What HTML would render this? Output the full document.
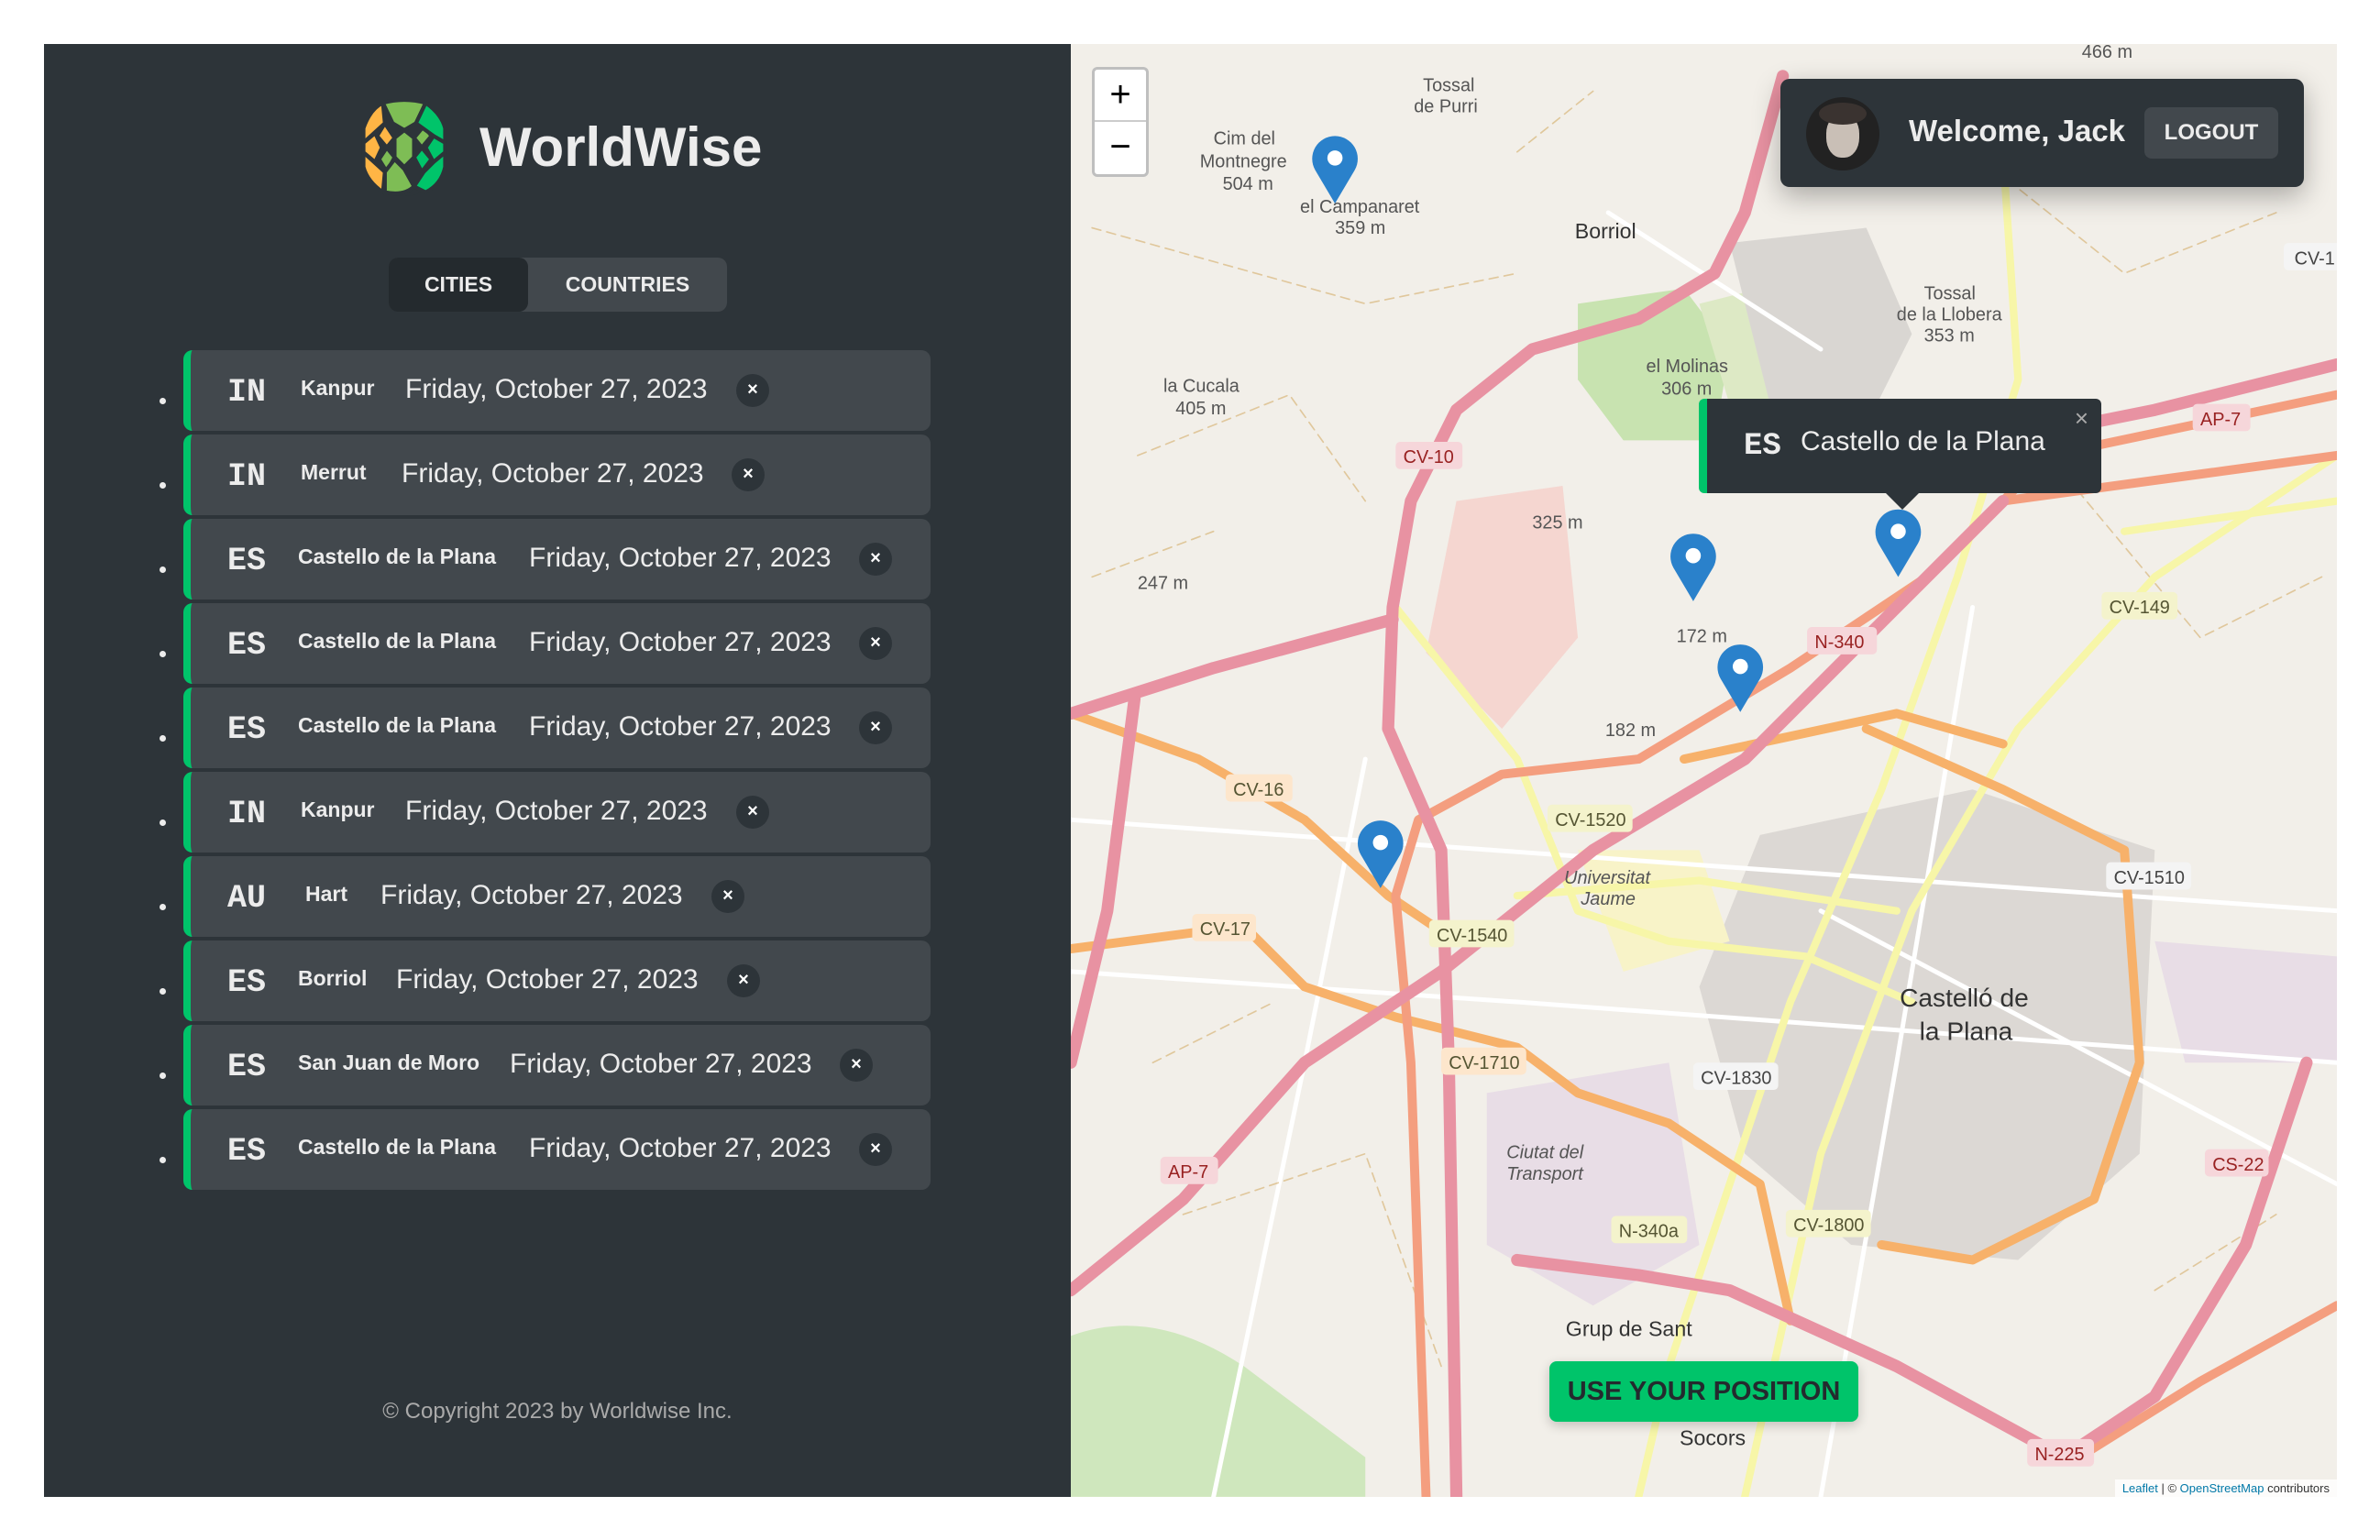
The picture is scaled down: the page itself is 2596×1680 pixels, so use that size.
<!DOCTYPE html>
<html><head><meta charset="utf-8">
<style>
*{margin:0;padding:0;box-sizing:border-box}
html,body{width:2596px;height:1680px;background:#fff;overflow:hidden;font-family:"Liberation Sans",sans-serif}
.side{position:absolute;left:48px;top:48px;width:1120px;height:1585px;background:#2d3439;color:#ececec}
.logo{position:absolute;left:340px;top:60px;width:106px;height:106px}
.brand{position:absolute;left:475px;top:78px;font-size:60px;font-weight:bold;color:#ececec}
.tabs{position:absolute;left:376px;top:233px;width:369px;height:59px;background:#42484d;border-radius:10px}
.tab{position:absolute;top:0;height:59px;line-height:59px;font-size:23px;font-weight:bold;text-align:center;color:#ececec}
.tab.a{left:0;width:152px;background:#242a2e;border-radius:10px}
.tab.b{left:152px;width:217px}
.item{position:absolute;left:152px;width:815px;height:88px;background:#42484d;border-radius:10px;border-left:8px solid #00c46a}
.dot{position:absolute;left:126px;width:7px;height:7px;border-radius:50%;background:#ececec}
.cc{position:absolute;left:40px;top:26px;font-family:"Liberation Mono",monospace;font-size:35px;font-weight:bold;color:#ececec}
.cn{position:absolute;top:28px;font-size:23px;font-weight:bold;color:#ececec}
.dt{position:absolute;top:26px;font-size:30px;color:#ececec}
.x{position:absolute;top:26px;width:36px;height:36px;border-radius:50%;background:#2d3439;color:#fff;font-size:20px;font-weight:bold;text-align:center;line-height:35px}
.copy{position:absolute;left:0;width:1120px;top:1478px;text-align:center;font-size:24px;color:#aaa}
.map{position:absolute;left:1168px;top:48px;width:1381px;height:1585px;background:#f2efe9;overflow:hidden}
.zoom{position:absolute;left:23px;top:25px;width:62px;height:120px;background:#fff;border:3px solid rgba(0,0,0,.25);border-radius:6px}
.zoom div{height:57px;text-align:center;font-size:40px;line-height:55px;color:#000}
.user{position:absolute;left:774px;top:38px;width:571px;height:118px;background:#2d3439;border-radius:10px;box-shadow:0 10px 30px rgba(0,0,0,.3)}
.av{position:absolute;left:28px;top:20px;width:80px;height:80px;border-radius:50%;background:#222;overflow:hidden}
.av i{position:absolute;left:22px;top:18px;width:36px;height:48px;border-radius:45%;background:#c9bfb6}
.av b{position:absolute;left:14px;top:6px;width:52px;height:24px;border-radius:50%;background:#3a3330}
.wel{position:absolute;left:140px;top:38px;font-size:33px;color:#ececec;font-weight:bold}
.lo{position:absolute;left:397px;top:31px;width:146px;height:56px;background:#42484d;border-radius:8px;color:#ececec;font-size:24px;font-weight:bold;text-align:center;line-height:56px}
.pop{position:absolute;left:685px;top:387px;width:439px;height:103px;background:#2d3439;border-left:9px solid #00c46a;border-radius:6px;color:#ececec}
.pop .c{position:absolute;left:40px;top:33px;font-family:"Liberation Mono",monospace;font-size:34px;font-weight:bold}
.pop .n{position:absolute;left:102px;top:30px;font-size:30px}
.pop .cl{position:absolute;right:14px;top:6px;font-size:26px;color:#aaa}
.pop .tip{position:absolute;left:195px;top:103px;width:0;height:0;border-left:18px solid transparent;border-right:18px solid transparent;border-top:18px solid #2d3439}
.btn{position:absolute;left:522px;top:1437px;width:337px;height:66px;background:#00c46a;border-radius:8px;color:#242a2e;font-size:29px;font-weight:bold;text-align:center;line-height:66px;box-shadow:0 4px 12px rgba(0,0,0,.2)}
.attr{position:absolute;right:0;bottom:0;background:rgba(255,255,255,.8);font-size:13px;padding:2px 8px;color:#333}
.attr b{color:#0078a8;font-weight:normal}
</style></head><body>
<div class="side">
 <svg class="logo" viewBox="0 0 100 100">
  <ellipse cx="50" cy="50" rx="44" ry="50" fill="#2d3439"/>
  <g stroke="#2d3439" stroke-width="4">
   <path d="M8 45 L8 30 Q15 10 28 4 L30 25 Z" fill="#ffb545"/>
   <path d="M8 55 L30 75 L28 96 Q12 85 8 70Z" fill="#ffb545"/>
   <path d="M8 45 L20 35 L27 50 L20 65 L8 55Z" fill="#ffb545"/>
   <path d="M30 25 L40 40 L32 50 L22 38Z" fill="#ffb545"/>
   <path d="M28 4 Q50 -2 72 4 L62 25 L50 32 L38 25Z" fill="#7ebd55"/>
   <path d="M40 40 L50 32 L60 40 L60 60 L50 70 L40 60Z" fill="#7ebd55"/>
   <path d="M32 50 L40 60 L32 75 L24 62Z" fill="#7ebd55"/>
   <path d="M30 75 L40 62 L50 72 L60 90 Q50 100 30 96Z" fill="#7ebd55"/>
   <path d="M60 40 L70 28 L78 38 L68 50Z" fill="#7ebd55"/>
   <path d="M72 4 Q88 15 92 30 L92 45 L80 38 L62 25Z" fill="#00c46a"/>
   <path d="M80 38 L92 45 L92 55 L80 65 L72 50Z" fill="#00c46a"/>
   <path d="M60 60 L68 50 L78 62 L68 75Z" fill="#00c46a"/>
   <path d="M70 75 L80 65 L92 55 L92 70 Q88 88 72 96 L60 90Z" fill="#00c46a"/>
  </g>
 </svg>
 <div class="brand">WorldWise</div>
 <div class="tabs"><div class="tab a">CITIES</div><div class="tab b">COUNTRIES</div></div>

 <div class="dot" style="top:386px"></div><div class="item" style="top:334px"><span class="cc">IN</span><span class="cn" style="left:120px">Kanpur</span><span class="dt" style="left:234px">Friday, October 27, 2023</span><span class="x" style="left:595px">×</span></div>
 <div class="dot" style="top:478px"></div><div class="item" style="top:426px"><span class="cc">IN</span><span class="cn" style="left:120px">Merrut</span><span class="dt" style="left:230px">Friday, October 27, 2023</span><span class="x" style="left:590px">×</span></div>
 <div class="dot" style="top:570px"></div><div class="item" style="top:518px"><span class="cc">ES</span><span class="cn" style="left:117px">Castello de la Plana</span><span class="dt" style="left:369px">Friday, October 27, 2023</span><span class="x" style="left:729px">×</span></div>
 <div class="dot" style="top:662px"></div><div class="item" style="top:610px"><span class="cc">ES</span><span class="cn" style="left:117px">Castello de la Plana</span><span class="dt" style="left:369px">Friday, October 27, 2023</span><span class="x" style="left:729px">×</span></div>
 <div class="dot" style="top:754px"></div><div class="item" style="top:702px"><span class="cc">ES</span><span class="cn" style="left:117px">Castello de la Plana</span><span class="dt" style="left:369px">Friday, October 27, 2023</span><span class="x" style="left:729px">×</span></div>
 <div class="dot" style="top:846px"></div><div class="item" style="top:794px"><span class="cc">IN</span><span class="cn" style="left:120px">Kanpur</span><span class="dt" style="left:234px">Friday, October 27, 2023</span><span class="x" style="left:595px">×</span></div>
 <div class="dot" style="top:938px"></div><div class="item" style="top:886px"><span class="cc">AU</span><span class="cn" style="left:125px">Hart</span><span class="dt" style="left:207px">Friday, October 27, 2023</span><span class="x" style="left:568px">×</span></div>
 <div class="dot" style="top:1030px"></div><div class="item" style="top:978px"><span class="cc">ES</span><span class="cn" style="left:117px">Borriol</span><span class="dt" style="left:224px">Friday, October 27, 2023</span><span class="x" style="left:585px">×</span></div>
 <div class="dot" style="top:1122px"></div><div class="item" style="top:1070px"><span class="cc">ES</span><span class="cn" style="left:117px">San Juan de Moro</span><span class="dt" style="left:348px">Friday, October 27, 2023</span><span class="x" style="left:708px">×</span></div>
 <div class="dot" style="top:1214px"></div><div class="item" style="top:1162px"><span class="cc">ES</span><span class="cn" style="left:117px">Castello de la Plana</span><span class="dt" style="left:369px">Friday, October 27, 2023</span><span class="x" style="left:729px">×</span></div>

 <div class="copy">© Copyright 2023 by Worldwise Inc.</div>
</div>

<div class="map">
 <svg width="1381" height="1585" viewBox="706 29 834 957" style="position:absolute;left:0;top:0" fill="none" stroke-linecap="round" stroke-linejoin="round">
  <path d="M1040 200 L1110 190 L1140 230 L1130 290 L1070 290 L1040 250Z" fill="#c8e3b0"/>
  <path d="M1120 200 L1200 180 L1220 260 L1150 300Z" fill="#dde9c5"/>
  <path d="M1140 160 L1230 150 L1260 220 L1220 300 L1170 280Z" fill="#d9d6d2"/>
  <path d="M960 330 L1030 320 L1040 420 L990 480 L940 430Z" fill="#f5d6d0"/>
  <path d="M1160 550 L1300 520 L1420 560 L1410 760 L1330 830 L1220 820 L1150 760 L1120 650Z" fill="#dcd8d4"/>
  <path d="M980 720 L1100 700 L1120 820 L1050 860 L980 820Z" fill="#e8dde6"/>
  <path d="M706 880 Q760 860 820 900 L900 960 L900 986 L706 986Z" fill="#cfe7bd"/>
  <path d="M1040 560 L1120 560 L1140 620 L1070 640Z" fill="#f8f3c8"/>
  <path d="M1420 620 L1540 630 L1540 700 L1440 700Z" fill="#e8dde6"/>
  <g stroke="#fff" stroke-width="3">
   <path d="M706 540 L1540 600"/><path d="M706 640 L1000 660 L1540 700"/><path d="M800 986 L860 700 L900 500"/>
   <path d="M1200 986 L1250 700 L1300 400"/><path d="M1540 780 L1200 600"/><path d="M1060 140 L1200 230"/>
  </g>
  <g stroke="#d8b77a" stroke-width="1" stroke-dasharray="6 4" opacity=".7">
   <path d="M720 150 L900 200 L1000 180"/><path d="M750 300 L850 260 L900 330"/><path d="M780 800 L900 760 L950 900"/>
   <path d="M1300 100 L1400 180 L1500 140"/><path d="M1350 300 L1450 420 L1530 380"/><path d="M1420 850 L1500 800"/>
   <path d="M760 700 L840 660"/><path d="M1000 100 L1050 60"/><path d="M720 380 L800 350"/>
  </g>
  <g stroke="#f7f6a8" stroke-width="5">
   <path d="M920 400 L1000 500 L1040 600 L1100 620 L1190 630 L1260 660"/>
   <path d="M1000 590 L1120 580 L1250 600"/>
   <path d="M1320 100 L1330 250 L1290 380 L1240 520 L1180 660 L1100 900 L1080 986"/>
   <path d="M1540 300 L1420 380 L1330 480 L1260 600 L1200 760 L1150 986"/>
   <path d="M1540 330 L1400 350"/>
  </g>
  <g stroke="#f7b16a" stroke-width="6">
   <path d="M706 470 L790 500 L860 540 L915 590 L960 620"/>
   <path d="M706 625 L820 610 L860 650 L920 670 L1000 690 L1040 720 L1100 740 L1160 780 L1180 870"/>
   <path d="M1230 480 L1320 520 L1400 560 L1410 700 L1380 790 L1300 830 L1240 820"/>
   <path d="M1110 500 L1250 470 L1320 490"/>
  </g>
  <g stroke="#f49e7f" stroke-width="6">
   <path d="M940 986 L930 700 L920 590 L935 540 L990 510 L1080 500 L1180 440 L1270 380 L1350 300 L1540 260"/>
   <path d="M1320 330 L1540 300"/>
   <path d="M1540 860 L1450 910 L1370 960"/>
  </g>
  <g stroke="#e892a2" stroke-width="8">
   <path d="M1175 50 L1150 140 L1130 180 L1080 210 L1010 230 L960 270 L930 330 L918 400 L915 480 L950 560 L955 700 L960 986"/>
   <path d="M706 850 L780 790 L860 700 L950 640 L1050 560 L1150 500 L1250 400 L1320 330"/>
   <path d="M1320 290 L1420 270 L1540 240"/>
   <path d="M706 470 L800 440 L918 408"/>
   <path d="M748 460 L730 600 L706 700"/>
   <path d="M1000 830 L1080 840 L1140 850 L1250 900 L1360 960 L1420 920 L1480 820 L1520 700"/>
  </g>
  <g font-family="Liberation Sans,sans-serif" font-size="12" fill="#555" stroke="none">
   <text x="800" y="95">Cim del</text><text x="791" y="110">Montnegre</text><text x="806" y="125">504 m</text>
   <text x="938" y="60">Tossal</text><text x="932" y="74">de Purri</text>
   <text x="857" y="140">el Campanaret</text><text x="880" y="154">359 m</text>
   <text x="1038" y="157" font-size="14" fill="#333">Borriol</text>
   <text x="1268" y="197">Tossal</text><text x="1250" y="211">de la Llobera</text><text x="1268" y="225">353 m</text>
   <text x="1085" y="245">el Molinas</text><text x="1095" y="260">306 m</text>
   <text x="767" y="258">la Cucala</text><text x="775" y="273">405 m</text>
   <text x="1010" y="348">325 m</text><text x="750" y="388">247 m</text><text x="1105" y="423">172 m</text><text x="1058" y="485">182 m</text>
   <text x="1372" y="38">466 m</text>
   <text x="1252" y="663" font-size="17" fill="#333">Castelló de</text><text x="1265" y="685" font-size="17" fill="#333">la Plana</text>
   <text x="1031" y="582" font-style="italic">Universitat</text><text x="1042" y="596" font-style="italic">Jaume</text>
   <text x="993" y="763" font-style="italic">Ciutat del</text><text x="993" y="777" font-style="italic">Transport</text>
   <text x="1032" y="880" font-size="14" fill="#333">Grup de Sant</text>
   <text x="1107" y="952" font-size="14" fill="#333">Socors</text>
  </g>
  <g font-family="Liberation Sans,sans-serif" font-size="12" stroke="none">
   <rect x="920" y="291" width="44" height="18" rx="3" fill="#f6d6da"/><text x="925" y="305" fill="#922">CV-10</text>
   <rect x="1445" y="266" width="38" height="18" rx="3" fill="#f6d6da"/><text x="1450" y="280" fill="#922">AP-7</text>
   <rect x="1191" y="413" width="46" height="18" rx="3" fill="#f6d6da"/><text x="1196" y="427" fill="#922">N-340</text>
   <rect x="1385" y="390" width="50" height="18" rx="3" fill="#f4f3cc"/><text x="1390" y="404" fill="#553">CV-149</text>
   <rect x="808" y="510" width="44" height="18" rx="3" fill="#fde6cc"/><text x="813" y="524" fill="#553">CV-16</text>
   <rect x="1020" y="530" width="56" height="18" rx="3" fill="#f4f3cc"/><text x="1025" y="544" fill="#553">CV-1520</text>
   <rect x="786" y="602" width="42" height="18" rx="3" fill="#fde6cc"/><text x="791" y="616" fill="#553">CV-17</text>
   <rect x="942" y="606" width="56" height="18" rx="3" fill="#f4f3cc"/><text x="947" y="620" fill="#553">CV-1540</text>
   <rect x="1388" y="568" width="56" height="18" rx="3" fill="#f4f4f4"/><text x="1393" y="582" fill="#444">CV-1510</text>
   <rect x="950" y="690" width="56" height="18" rx="3" fill="#fde6cc"/><text x="955" y="704" fill="#553">CV-1710</text>
   <rect x="1116" y="700" width="56" height="18" rx="3" fill="#f4f4f4"/><text x="1121" y="714" fill="#444">CV-1830</text>
   <rect x="765" y="762" width="38" height="18" rx="3" fill="#f6d6da"/><text x="770" y="776" fill="#922">AP-7</text>
   <rect x="1453" y="757" width="42" height="18" rx="3" fill="#f6d6da"/><text x="1458" y="771" fill="#922">CS-22</text>
   <rect x="1062" y="801" width="50" height="18" rx="3" fill="#f4f3cc"/><text x="1067" y="815" fill="#553">N-340a</text>
   <rect x="1177" y="797" width="56" height="18" rx="3" fill="#f4f3cc"/><text x="1182" y="811" fill="#553">CV-1800</text>
   <rect x="1336" y="948" width="44" height="18" rx="3" fill="#f6d6da"/><text x="1341" y="962" fill="#922">N-225</text>
   <rect x="1505" y="160" width="40" height="18" rx="3" fill="#f4f4f4"/><text x="1512" y="174" fill="#444">CV-1</text>
  </g>
  <g stroke="none">
   <g transform="translate(880,134)"><path d="M0 0 L-13 -22 A15 15 0 1 1 13 -22 Z" fill="#2a81cb"/><circle cx="0" cy="-30" r="5" fill="#fff"/></g>
   <g transform="translate(1116,396)"><path d="M0 0 L-13 -22 A15 15 0 1 1 13 -22 Z" fill="#2a81cb"/><circle cx="0" cy="-30" r="5" fill="#fff"/></g>
   <g transform="translate(1147,469)"><path d="M0 0 L-13 -22 A15 15 0 1 1 13 -22 Z" fill="#2a81cb"/><circle cx="0" cy="-30" r="5" fill="#fff"/></g>
   <g transform="translate(1251,380)"><path d="M0 0 L-13 -22 A15 15 0 1 1 13 -22 Z" fill="#2a81cb"/><circle cx="0" cy="-30" r="5" fill="#fff"/></g>
   <g transform="translate(910,585)"><path d="M0 0 L-13 -22 A15 15 0 1 1 13 -22 Z" fill="#2a81cb"/><circle cx="0" cy="-30" r="5" fill="#fff"/></g>
  </g>
 </svg>
 <div class="zoom"><div style="border-bottom:2px solid #ccc">+</div><div>−</div></div>
 <div class="user"><div class="av"><i></i><b></b></div><div class="wel">Welcome, Jack</div><div class="lo">LOGOUT</div></div>
 <div class="pop"><span class="c">ES</span><span class="n">Castello de la Plana</span><span class="cl">×</span><div class="tip"></div></div>
 <div class="btn">USE YOUR POSITION</div>
 <div class="attr"><b>Leaflet</b> | © <b>OpenStreetMap</b> contributors</div>
</div>
</body></html>
